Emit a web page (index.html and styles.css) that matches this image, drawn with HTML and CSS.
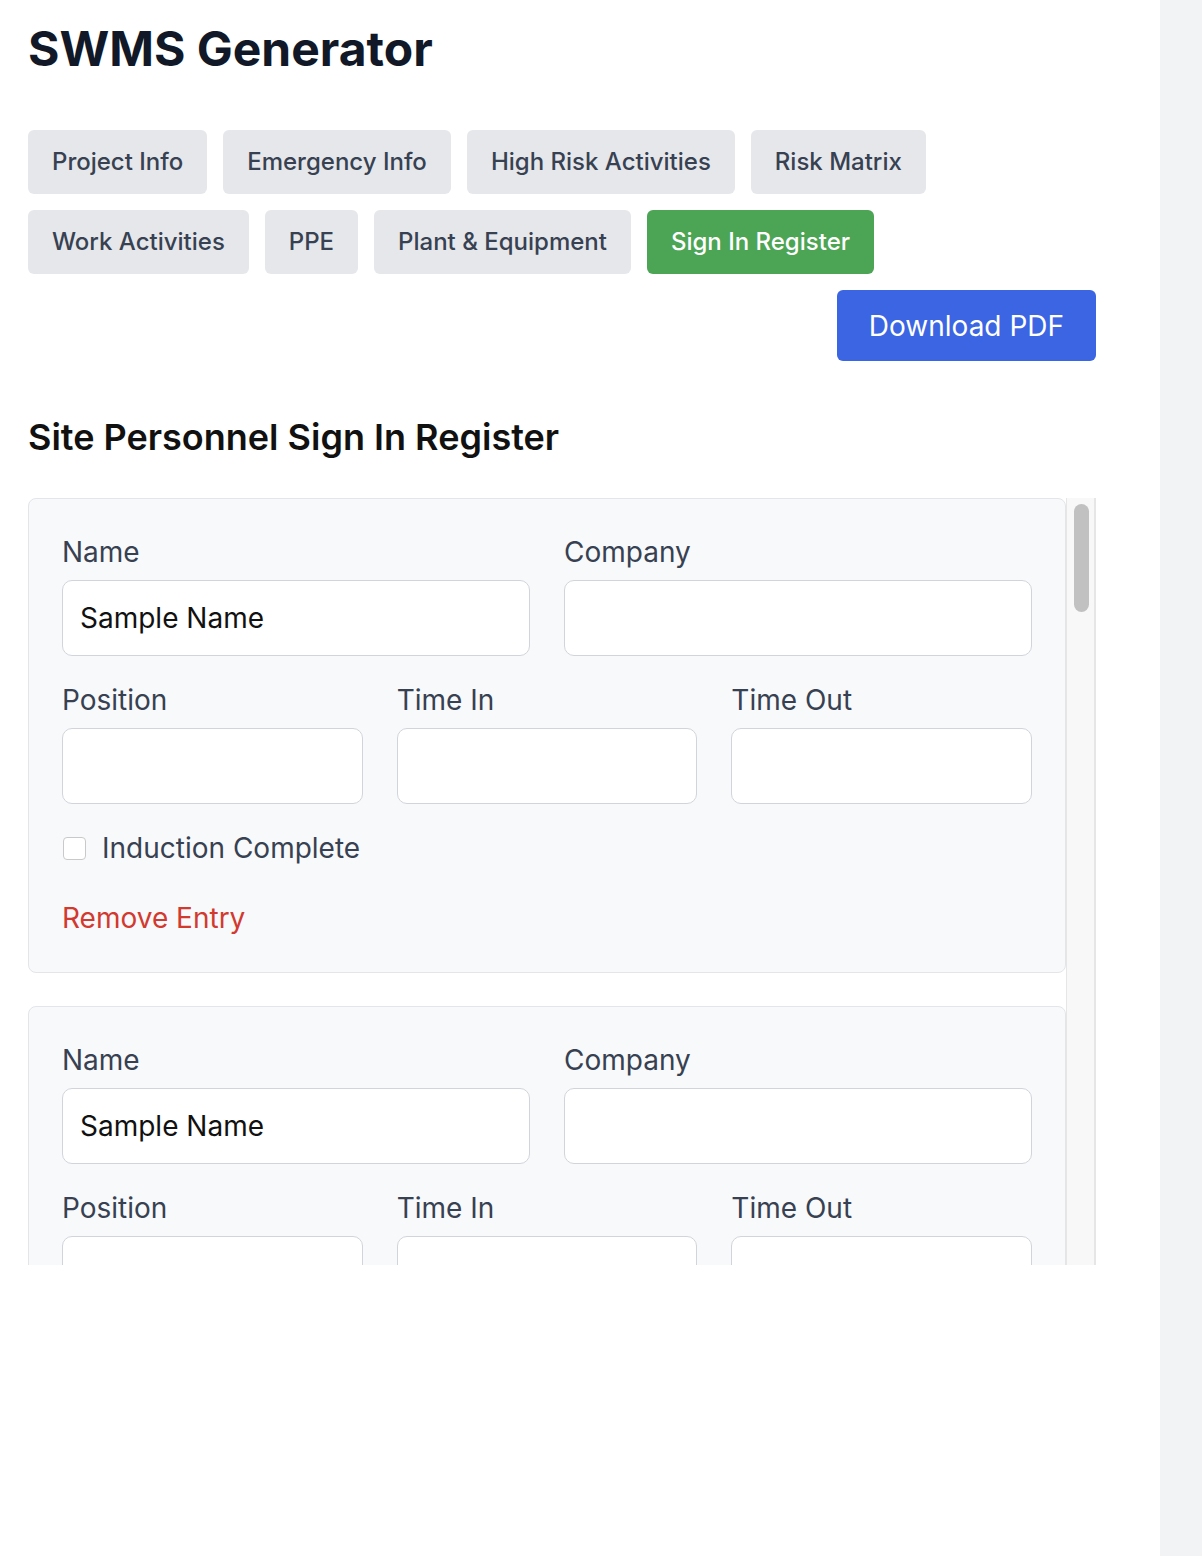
FILE: index.html
```html
<!DOCTYPE html>
<html lang="en">
<head>
<meta charset="utf-8">
<title>SWMS Generator</title>
<link rel="stylesheet" href="styles.css">
</head>
<body>
<div class="app">
  <main class="main">
    <h1 class="title">SWMS Generator</h1>
    <nav class="tabs">
      <button class="tab">Project Info</button>
      <button class="tab">Emergency Info</button>
      <button class="tab">High Risk Activities</button>
      <button class="tab">Risk Matrix</button>
      <button class="tab">Work Activities</button>
      <button class="tab">PPE</button>
      <button class="tab">Plant &amp; Equipment</button>
      <button class="tab tab-active">Sign In Register</button>
    </nav>
    <div class="actions">
      <button class="btn-download">Download PDF</button>
    </div>
    <h2 class="section-title">Site Personnel Sign In Register</h2>
    <div class="register">
      <div class="register-list">
        <div class="entry">
          <div class="row row-2">
            <div class="field"><label class="label">Name</label><input class="input" type="text" value="Sample Name"></div>
            <div class="field"><label class="label">Company</label><input class="input" type="text"></div>
          </div>
          <div class="row row-3">
            <div class="field"><label class="label">Position</label><input class="input" type="text"></div>
            <div class="field"><label class="label">Time In</label><input class="input" type="text"></div>
            <div class="field"><label class="label">Time Out</label><input class="input" type="text"></div>
          </div>
          <label class="check-row"><input class="check" type="checkbox"><span>Induction Complete</span></label>
          <button class="remove">Remove Entry</button>
        </div>
        <div class="entry">
          <div class="row row-2">
            <div class="field"><label class="label">Name</label><input class="input" type="text" value="Sample Name"></div>
            <div class="field"><label class="label">Company</label><input class="input" type="text"></div>
          </div>
          <div class="row row-3">
            <div class="field"><label class="label">Position</label><input class="input" type="text"></div>
            <div class="field"><label class="label">Time In</label><input class="input" type="text"></div>
            <div class="field"><label class="label">Time Out</label><input class="input" type="text"></div>
          </div>
        </div>
      </div>
      <div class="scrollbar"><div class="scroll-thumb"></div></div>
    </div>
  </main>
  <aside class="side"></aside>
</div>
</body>
</html>
```
FILE: styles.css
```css
* { box-sizing: border-box; }
html, body { margin: 0; padding: 0; }
body {
  font-family: Inter, "Noto Sans", "Liberation Sans", sans-serif;
  background: #f2f3f5;
  color: #111827;
}
.app { display: flex; min-height: 100vh; }
.main {
  width: 1160px;
  flex: none;
  background: #ffffff;
  padding: 20px 64px 0 28px;
  min-height: 100vh;
}
.side { flex: 1; background: #f2f3f5; }

.title {
  margin: 0;
  font-size: 48px;
  line-height: 58px;
  font-weight: 700;
  color: #111827;
}
.tabs {
  display: flex;
  flex-wrap: wrap;
  gap: 16px 16px;
  margin-top: 52px;
}
.tab {
  font-family: inherit;
  font-size: 24px;
  font-weight: 500;
  height: 64px;
  line-height: 64px;
  padding: 0 24px;
  border: none;
  border-radius: 6px;
  background: #e5e7eb;
  color: #374151;
}
.tab-active { background: #4ca455; color: #ffffff; }

.actions { display: flex; justify-content: flex-end; margin-top: 16px; }
.btn-download {
  font-family: inherit;
  font-size: 28px;
  height: 71px;
  padding: 0 32px;
  border: none;
  border-radius: 6px;
  background: #3b65e2;
  color: #ffffff;
}

.section-title {
  margin: 54px 0 0;
  font-size: 36px;
  line-height: 44px;
  font-weight: 600;
  color: #111111;
}

.register {
  display: flex;
  margin-top: 39px;
  height: 767px;
  background: #ffffff;
}
.register-list {
  flex: 1;
  min-width: 0;
  overflow: hidden;
}
.scrollbar {
  flex: none;
  width: 30px;
  background: #f8f8f8;
  border-left: 1px solid #e6e6e6;
  border-right: 2px solid #e6e6e6;
  padding: 6px 5px 0 7px;
}
.scroll-thumb {
  height: 108px;
  border-radius: 8px;
  background: #c1c1c1;
}

.entry {
  background: #f8f9fb;
  border: 1px solid #e3e5e9;
  border-radius: 8px;
  padding: 33px 33px 34px;
  margin-bottom: 33px;
}
.row { display: grid; gap: 34px; margin-bottom: 24px; }
.row-2 { grid-template-columns: 1fr 1fr; }
.row-3 { grid-template-columns: 1fr 1fr 1fr; }
.field { min-width: 0; }
.label {
  display: block;
  font-size: 28px;
  line-height: 40px;
  color: #374151;
  margin-bottom: 8px;
}
.input {
  display: block;
  width: 100%;
  height: 76px;
  border: 1.5px solid #d1d5db;
  border-radius: 10px;
  background: #ffffff;
  font-family: inherit;
  font-size: 28px;
  color: #111111;
  padding: 0 17px;
  outline: none;
}
.check-row {
  display: flex;
  align-items: center;
  gap: 16px;
  height: 40px;
  font-size: 28px;
  color: #374151;
}
.check {
  appearance: none;
  -webkit-appearance: none;
  margin: 0 0 0 1px;
  width: 23px;
  height: 23px;
  border: 1px solid #c9c9c9;
  border-radius: 4px;
  background: #ffffff;
}
.remove {
  display: block;
  margin-top: 30px;
  padding: 0;
  border: none;
  background: none;
  font-family: inherit;
  font-size: 28px;
  line-height: 40px;
  color: #d2392f;
}
```
